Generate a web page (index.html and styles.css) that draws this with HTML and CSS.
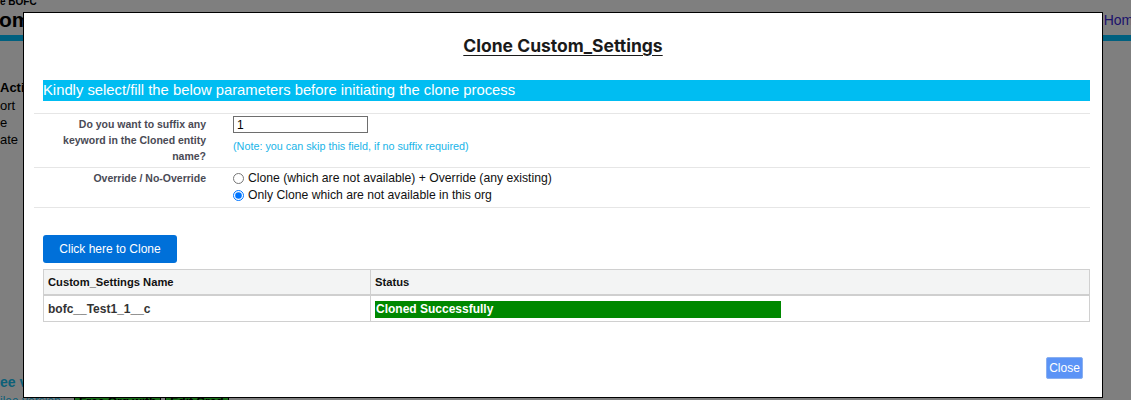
FILE: index.html
```html
<!DOCTYPE html>
<html>
<head>
<meta charset="utf-8">
<link rel="stylesheet" href="styles.css">
</head>
<body>
<div class="page">
  <div class="topline">e BOFC</div>
  <div class="headrow">
    <div class="bigtitle">om</div>
    <a class="homelink">Home</a>
  </div>
  <div class="tealbar"></div>
  <div class="sidenav">
    <div class="navhead">Acti</div>
    <div class="navitem">ort</div>
    <div class="navitem">e</div>
    <div class="navitem">ate</div>
  </div>
  <div class="footer-area">
    <div class="seever">ee ve</div>
    <div class="footrow">
      <span class="footlink">ilee version</span>
      <span class="footbtn">Free Org with</span>
      <span class="footbtn">Edit Cred</span>
    </div>
  </div>
</div>
<div class="overlay"></div>
<div class="modal">
  <h2 class="modal-title">Clone Custom_Settings</h2>
  <div class="modal-body">
    <div class="banner">Kindly select/fill the below parameters before initiating the clone process</div>
    <div class="form">
      <div class="form-row">
        <div class="form-label">Do you want to suffix any keyword in the Cloned entity name?</div>
        <div class="form-field">
          <input class="text-input" type="text" value="1">
          <div class="note">(Note: you can skip this field, if no suffix required)</div>
        </div>
      </div>
      <div class="form-row">
        <div class="form-label">Override / No-Override</div>
        <div class="form-field radios">
          <label class="radio"><input type="radio" name="ov"> Clone (which are not available) + Override (any existing)</label>
          <label class="radio"><input type="radio" name="ov" checked> Only Clone which are not available in this org</label>
        </div>
      </div>
    </div>
    <button class="clone-btn">Click here to Clone</button>
    <table class="results">
      <thead>
        <tr><th class="col-name">Custom_Settings Name</th><th>Status</th></tr>
      </thead>
      <tbody>
        <tr><td class="col-name">bofc__Test1_1__c</td><td><div class="status-ok">Cloned Successfully</div></td></tr>
      </tbody>
    </table>
  </div>
  <div class="modal-footer">
    <button class="close-btn">Close</button>
  </div>
</div>
</body>
</html>
```

FILE: styles.css
```css
html, body {
  margin: 0;
  padding: 0;
  height: 400px;
  overflow: hidden;
}
body {
  font-family: "Liberation Sans", Arial, sans-serif;
  background: #ffffff;
  color: #000;
  position: relative;
}
.page {
  height: 400px;
  position: relative;
}
.topline {
  font-size: 10px;
  font-weight: bold;
  line-height: 10px;
  margin-top: -3px;
}
.headrow {
  display: flex;
  justify-content: space-between;
  align-items: flex-end;
  height: 26px;
}
.bigtitle {
  font-size: 21px;
  font-weight: bold;
  line-height: 26px;
  margin-left: -1px;
}
.homelink {
  font-size: 14px;
  color: #3a28d8;
  margin-right: -10px;
  line-height: 18px;
  padding-bottom: 4px;
}
.tealbar {
  height: 6px;
  background: #00c0ff;
  margin-top: 2px;
}
.sidenav {
  margin-top: 38px;
  font-size: 13px;
}
.navhead {
  font-weight: bold;
  line-height: 18px;
}
.navitem {
  line-height: 17px;
}
.footer-area {
  position: absolute;
  left: 0;
  top: 376px;
}
.seever {
  font-size: 14px;
  font-weight: bold;
  color: #18c0f0;
  line-height: 18px;
}
.footrow {
  display: flex;
  gap: 4px;
  font-size: 12px;
  margin-top: 3px;
}
.footlink {
  color: #18c0f0;
  width: 70px;
}
.footbtn {
  background: #2ed62e;
  border: 1px solid #000;
  padding: 0 4px;
  font-weight: bold;
}
.overlay {
  position: absolute;
  left: 0;
  top: 0;
  width: 1131px;
  height: 400px;
  background: rgba(0, 0, 0, 0.5);
}
.modal {
  position: absolute;
  left: 23px;
  top: 12px;
  width: 1078px;
  height: 384px;
  background: #fff;
  border: 1px solid #000;
  display: flex;
  flex-direction: column;
}
.modal-title {
  margin: 0;
  padding-top: 22px;
  height: 45px;
  box-sizing: border-box;
  text-align: center;
  font-family: Inter, "Liberation Sans", sans-serif;
  font-size: 17.5px;
  font-weight: 700;
  color: #1a1a1a;
  text-decoration: underline;
  text-underline-offset: 3px;
  line-height: 22px;
}
.modal-body {
  padding: 22px 12px 0 10px;
}
.banner {
  margin-left: 9px;
  background: #00bdf2;
  color: #fff;
  font-size: 14.8px;
  height: 21px;
  line-height: 21px;
  white-space: nowrap;
}
.form {
  margin-top: 12px;
  border-top: 1px solid #e6e6e6;
}
.form-row {
  display: grid;
  grid-template-columns: 184px 1fr;
  column-gap: 15px;
  border-bottom: 1px solid #e6e6e6;
  padding: 2px 0 3px;
}
.form-label {
  text-align: right;
  padding-right: 12px;
  font-size: 10.5px;
  font-weight: bold;
  color: #4a4a55;
  line-height: 16px;
}
.text-input {
  display: block;
  width: 135px;
  height: 17px;
  box-sizing: border-box;
  border: 1px solid #6e6e6e;
  padding: 0 3px;
  margin: 0;
  font-family: "Liberation Sans", Arial, sans-serif;
  font-size: 12px;
  color: #000;
}
.note {
  color: #18b4e8;
  font-size: 10.8px;
  margin-top: 7px;
  line-height: 12px;
}
.radios {
  display: flex;
  flex-direction: column;
}
.radio {
  display: flex;
  align-items: center;
  font-size: 12.2px;
  color: #111;
  line-height: 17px;
}
.radio input {
  margin: 0 4px 0 0;
  width: 11px;
  height: 11px;
}
.clone-btn {
  display: block;
  margin: 27px 0 0 9px;
  width: 134px;
  height: 28px;
  background: #0070d9;
  color: #fff;
  border: none;
  border-radius: 3px;
  font-family: "Liberation Sans", Arial, sans-serif;
  font-size: 12px;
  padding: 0;
}
.results {
  margin: 6px 0 0 9px;
  width: calc(100% - 9px);
  border-collapse: collapse;
  font-size: 11.2px;
}
.results th, .results td {
  border: 1px solid #d0d0d0;
  text-align: left;
  padding: 0 4px;
}
.results th {
  background: #f3f4f4;
  height: 24px;
  font-weight: bold;
  color: #111;
  border-bottom: 2px solid #cfcfcf;
}
.results td {
  height: 25px;
  font-weight: bold;
  color: #333;
  font-size: 12px;
}
.results .col-name {
  width: 318px;
}
.status-ok {
  background: #008800;
  color: #fff;
  width: 406px;
  height: 17px;
  line-height: 17px;
  font-size: 12px;
  font-weight: bold;
  padding-left: 1px;
  box-sizing: border-box;
  margin-top: 1px;
}
.modal-footer {
  margin-top: auto;
  display: flex;
  justify-content: flex-end;
  padding: 0 19px 18px 0;
}
.close-btn {
  background: #5b93f6;
  color: #fff;
  border: 1px solid #8ab0f0;
  border-radius: 2px;
  width: 37px;
  height: 22px;
  padding: 0;
  font-family: "Liberation Sans", Arial, sans-serif;
  font-size: 12px;
}
```
